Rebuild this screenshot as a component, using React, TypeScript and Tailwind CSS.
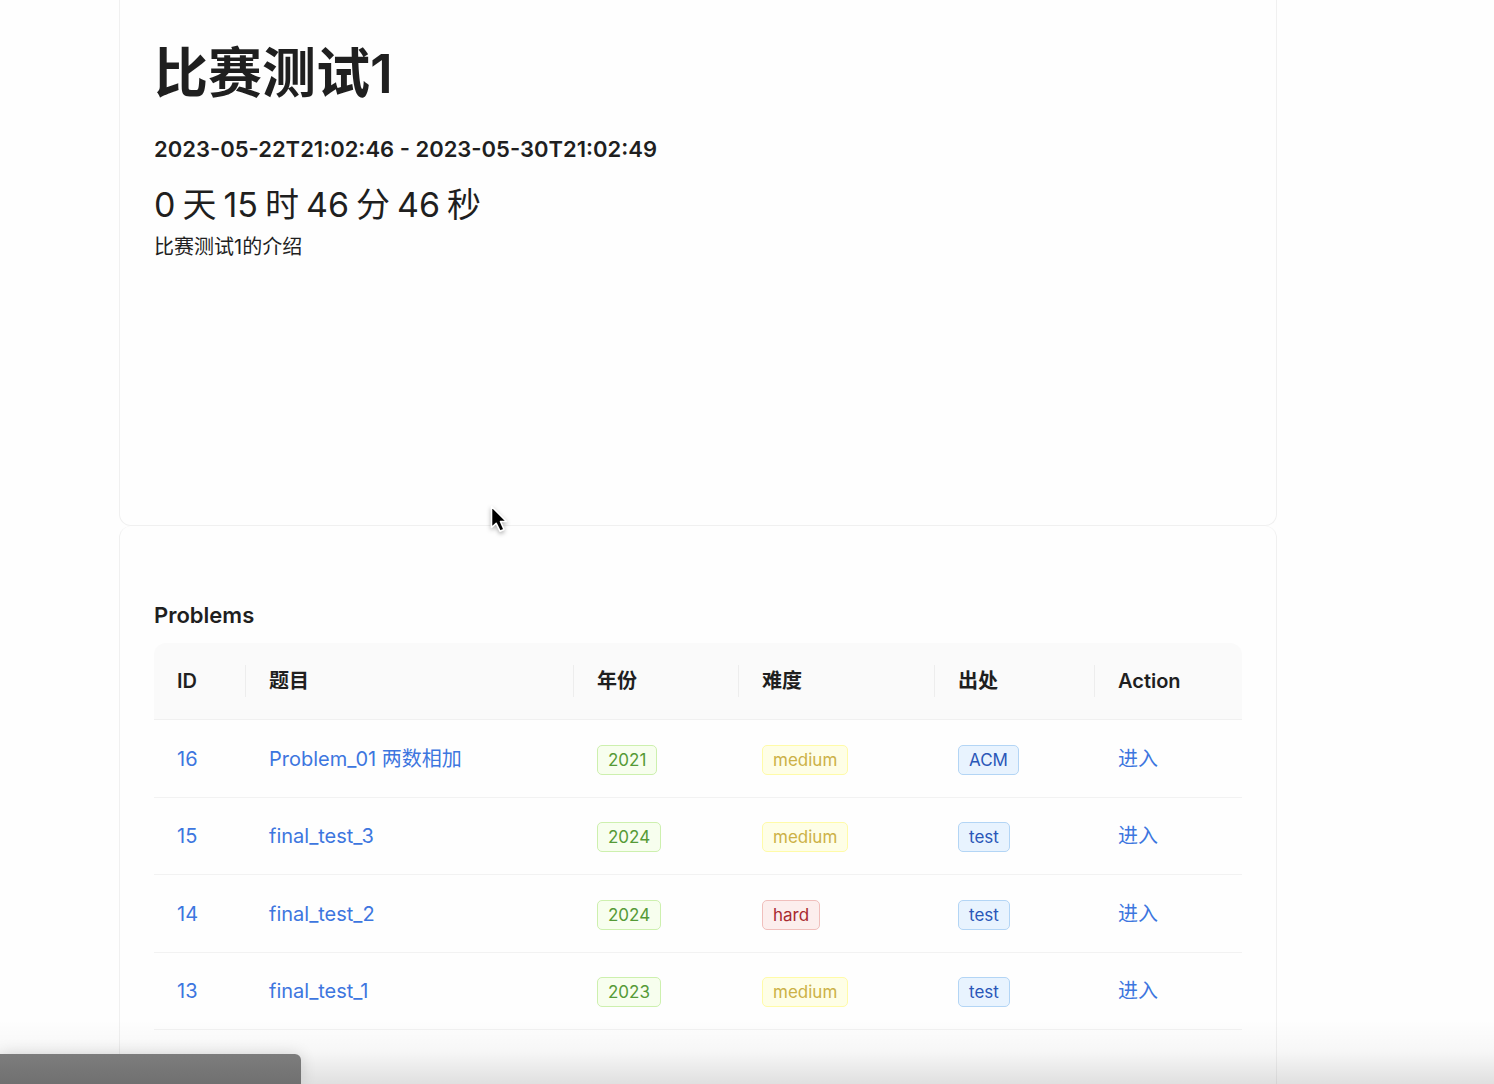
type Tone = 'green' | 'yellow' | 'red' | 'blue';

const tones: Record<Tone, string> = {
  green: 'border-[#cdf0ae] bg-[#f7feee] text-[#559a36]',
  yellow: 'border-[#fffba8] bg-[#fefee6] text-[#ccb146]',
  red: 'border-[#f0bfbc] bg-[#fceeed] text-[#a92a30]',
  blue: 'border-[#b3d5f5] bg-[#e8f3fe] text-[#2a57b8]',
};

const problems: { id: number; title: string; year: string; level: string; source: string }[] = [
  { id: 16, title: 'Problem_01 两数相加', year: '2021', level: 'medium', source: 'ACM' },
  { id: 15, title: 'final_test_3', year: '2024', level: 'medium', source: 'test' },
  { id: 14, title: 'final_test_2', year: '2024', level: 'hard', source: 'test' },
  { id: 13, title: 'final_test_1', year: '2023', level: 'medium', source: 'test' },
];

const columns = [
  { label: 'ID', width: 'w-[92px]' },
  { label: '题目', width: '' },
  { label: '年份', width: 'w-[165px]' },
  { label: '难度', width: 'w-[196px]' },
  { label: '出处', width: 'w-[160px]' },
  { label: 'Action', width: 'w-[147px]' },
];

const countdown = ['0', '天', '15', '时', '46', '分', '46', '秒'];

function Tag({ tone, children }: { tone: Tone; children: string }) {
  return (
    <span className={`mt-px inline-block rounded-[5px] border px-[10px] align-middle text-[17px] leading-7 ${tones[tone]}`}>
      {children}
    </span>
  );
}

function Pointer() {
  return (
    <svg
      className="pointer-events-none absolute top-[503px] left-[488px] drop-shadow-[0_2px_2px_rgba(0,0,0,0.3)]"
      width="21"
      height="31"
      viewBox="0 0 21 31"
      aria-hidden="true"
    >
      <path
        d="M3.5 3.5V24.5L8.2 20.3L12 28.2L16 26.4L12.5 18.5H18.5Z"
        fill="#000"
        stroke="#fff"
        strokeWidth="1.6"
        strokeLinejoin="round"
      />
    </svg>
  );
}

export default function App() {
  return (
    <div className="relative h-screen overflow-hidden bg-[#fefefe] font-[Inter,'Noto_Sans_CJK_SC',sans-serif] text-[20px] text-[#1f1f1f]">
      <main className="mr-[217px] ml-[119px]">
        <section className="h-[526px] rounded-b-xl border border-t-0 border-[#f0f0f0] px-[34px] pt-[41px]">
          <h1 className="text-[54px] leading-[66px] font-semibold">比赛测试1</h1>
          <h2 className="mt-7 text-[22px] leading-7 font-semibold">2023-05-22T21:02:46 - 2023-05-30T21:02:49</h2>
          <p className="mt-[18px] flex gap-[7px] text-[34px] leading-12">
            {countdown.map((part, i) => (
              <span key={i}>{part}</span>
            ))}
          </p>
          <p className="mt-1 leading-7">比赛测试1的介绍</p>
        </section>

        <section className="h-[640px] rounded-t-xl border border-t-0 border-[#f0f0f0] px-[34px] pt-[75px]">
          <h3 className="text-[22px] leading-7 font-semibold">Problems</h3>
          <table className="mt-[14px] w-full table-fixed border-separate border-spacing-0 text-left">
            <thead>
              <tr>
                {columns.map(({ label, width }, i) => (
                  <th
                    key={label}
                    scope="col"
                    className={`relative h-[77px] border-b border-[#f0f0f0] bg-[#fafafa] pl-[23px] font-semibold first:rounded-tl-xl last:rounded-tr-xl ${width}`}
                  >
                    {label}
                    {i < columns.length - 1 && (
                      <span className="absolute top-1/2 right-0 h-8 w-px -translate-y-1/2 bg-[#ededed]" />
                    )}
                  </th>
                ))}
              </tr>
            </thead>
            <tbody className="[&_a]:text-[#3d76df] [&_td]:h-[77px] [&_td]:border-b [&_td]:border-[#f2f2f2] [&_td]:pl-[23px] [&>tr:nth-child(odd)>td]:h-[78px]">
              {problems.map((p) => (
                <tr key={p.id}>
                  <td><a href={`#problem-${p.id}`}>{p.id}</a></td>
                  <td><a href={`#problem-${p.id}`}>{p.title}</a></td>
                  <td><Tag tone="green">{p.year}</Tag></td>
                  <td><Tag tone={p.level === 'hard' ? 'red' : 'yellow'}>{p.level}</Tag></td>
                  <td><Tag tone="blue">{p.source}</Tag></td>
                  <td><a href={`#enter-${p.id}`}>进入</a></td>
                </tr>
              ))}
            </tbody>
          </table>
        </section>
      </main>

      <div className="pointer-events-none absolute inset-x-0 bottom-0 h-16 bg-linear-to-b from-transparent via-black/3 to-black/12" />
      <div className="absolute bottom-0 left-0 h-[30px] w-[301px] rounded-tr-md bg-linear-to-b from-[#7d7d7d] to-[#707070] shadow-[0_0_16px_rgba(0,0,0,0.14)]" />
      <Pointer />
    </div>
  );
}
